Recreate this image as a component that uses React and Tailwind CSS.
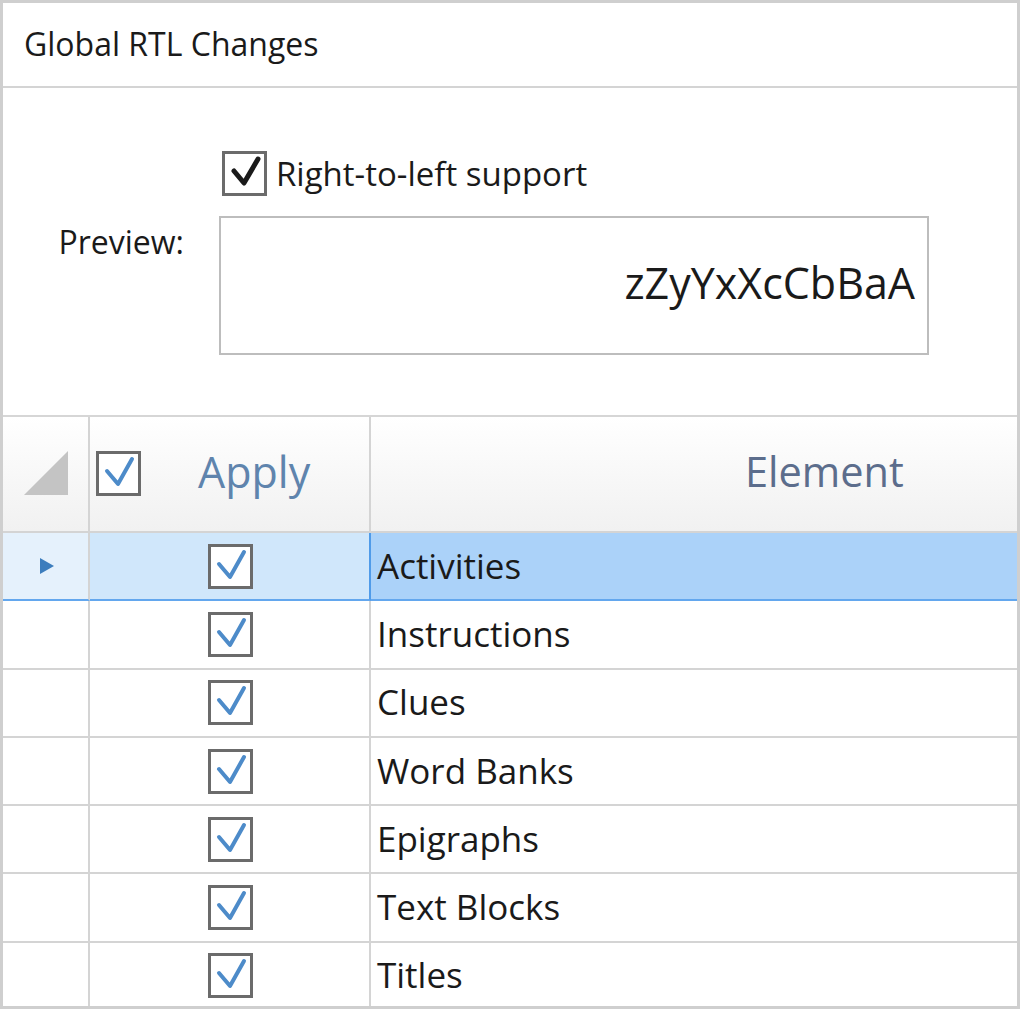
import React from 'react';

const rows = ['Activities', 'Instructions', 'Clues', 'Word Banks', 'Epigraphs', 'Text Blocks', 'Titles'];

const font = { fontFamily: '"Open Sans", "Noto Sans", sans-serif' };

const BlueCheck = () => (
  <div className="w-[45px] h-[45px] border-[3px] border-[#6b6b6b] bg-white flex items-center justify-center">
    <svg width="39" height="39" viewBox="0 0 39 39">
      <path d="M8 17 L19 30 L33 5" fill="none" stroke="#4d8bc9" strokeWidth="4" strokeLinecap="round" strokeLinejoin="round" />
    </svg>
  </div>
);

const BlackCheck = () => (
  <div className="w-[45px] h-[45px] border-[3px] border-[#6b6b6b] bg-white flex items-center justify-center">
    <svg width="39" height="39" viewBox="0 0 39 39">
      <path d="M9 17 L19 29 L33 5" fill="none" stroke="#1a1a1a" strokeWidth="5" strokeLinecap="round" strokeLinejoin="round" />
    </svg>
  </div>
);

export default function App() {
  return (
    <div className="w-[1020px] h-[1009px] bg-white border-[3px] border-[#cfcfcf] flex flex-col overflow-hidden text-[#1a1a1a]" style={font}>
      {/* title */}
      <div className="h-[85px] border-b-2 border-[#d4d4d4] flex items-center pl-[21px] pb-[1px] shrink-0">
        <span className="text-[32px] leading-none">Global RTL Changes</span>
      </div>

      {/* options */}
      <div className="h-[329px] border-b-2 border-[#d6d6d6] shrink-0 pt-[63px]">
        <div className="flex items-center pl-[219px] gap-[9px]">
          <BlackCheck />
          <span className="text-[33px] leading-none">Right-to-left support</span>
        </div>
        <div className="flex items-start mt-[20px]">
          <div className="w-[181px] text-right pt-[10px] text-[32px] leading-none">Preview:</div>
          <div className="ml-[35px] w-[710px] h-[139px] border-2 border-[#bdbdbd] flex items-center justify-end pr-[12px] pb-[6px]">
            <span className="text-[43px] leading-none">zZyYxXcCbBaA</span>
          </div>
        </div>
      </div>

      {/* grid */}
      <div className="flex-1 grid grid-cols-[87px_281px_1fr] grid-rows-[116px] auto-rows-[68.3px] text-[35px]">
        {/* header */}
        <div className="border-r-2 border-b-2 border-[#d4d4d4] bg-gradient-to-b from-white to-[#f1f1f1] flex items-end justify-end pr-[20px] pb-[36px]">
          <svg width="44" height="44" viewBox="0 0 44 44">
            <polygon points="44,0 44,44 0,44" fill="#c4c4c4" />
          </svg>
        </div>
        <div className="border-r-2 border-b-2 border-[#d4d4d4] bg-gradient-to-b from-white to-[#f1f1f1] flex items-center pl-[6px] pb-[2px]">
          <BlueCheck />
          <span className="ml-[57px] text-[43px] text-[#5f84ad] leading-none pb-[4px]">Apply</span>
        </div>
        <div className="border-b-2 border-[#d4d4d4] bg-gradient-to-b from-white to-[#f1f1f1] flex items-center pl-[374px] pb-[4px]">
          <span className="text-[41.5px] text-[#5c6d8c] leading-none">Element</span>
        </div>

        {rows.map((r, i) => {
          const sel = i === 0;
          return (
            <React.Fragment key={r}>
              <div className={`border-r-2 border-b-2 flex items-center pl-[35px] ${sel ? 'bg-[#e5f1fc] border-b-[#63a7ee] border-r-[#d4d4d4]' : 'border-[#d4d4d4]'}`}>
                {sel && (
                  <svg width="18" height="20" viewBox="0 0 18 20">
                    <polygon points="2,2 16,10 2,18" fill="#3c7dbd" />
                  </svg>
                )}
              </div>
              <div className={`border-r-2 border-b-2 flex items-center justify-center pl-[2px] ${sel ? 'bg-[#d0e7fb] border-b-[#63a7ee] border-r-[#4f9be9]' : 'border-[#d4d4d4]'}`}>
                <BlueCheck />
              </div>
              <div className={`border-b-2 flex items-center pl-[6px] pb-[2px] ${sel ? 'bg-[#abd2f9] border-[#63a7ee]' : 'border-[#d4d4d4]'}`}>
                <span className="leading-none">{r}</span>
              </div>
            </React.Fragment>
          );
        })}
      </div>
    </div>
  );
}
